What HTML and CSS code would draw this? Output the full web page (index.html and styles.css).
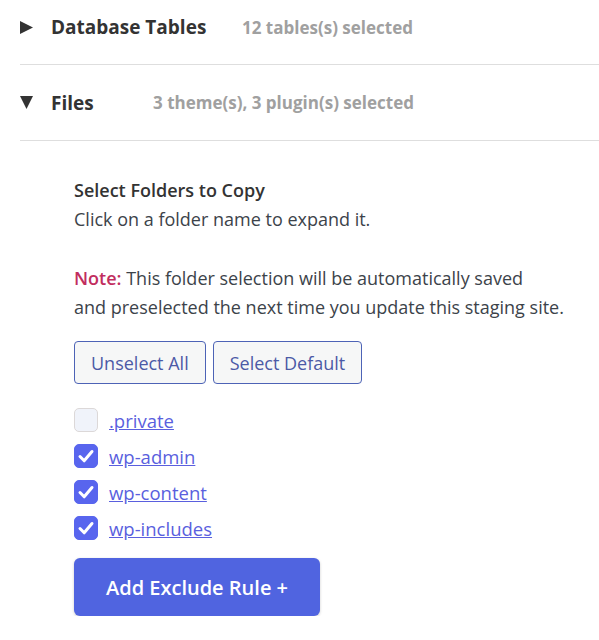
FILE: index.html
```html
<!DOCTYPE html>
<html>
<head>
<meta charset="utf-8">
<link rel="stylesheet" href="styles.css">
</head>
<body>
<div class="panel">
  <div class="section-header section-header--first">
    <svg class="caret" width="13" height="13" viewBox="0 0 13 13"><polygon points="0,0 13,6.5 0,13" /></svg>
    <span class="section-title section-title--db">Database Tables</span>
    <span class="section-sub">12 tables(s) selected</span>
  </div>
  <div class="section-header">
    <svg class="caret" width="13" height="13" viewBox="0 0 13 13"><polygon points="0,0 13,0 6.5,13" /></svg>
    <span class="section-title section-title--files">Files</span>
    <span class="section-sub">3 theme(s), 3 plugin(s) selected</span>
  </div>
  <div class="content">
    <p class="intro"><strong class="intro-title">Select Folders to Copy</strong><br>Click on a folder name to expand it.</p>
    <p class="note"><span class="note-label">Note:</span> This folder selection will be automatically saved<br>and preselected the next time you update this staging site.</p>
    <div class="btn-row">
      <button class="btn-outline">Unselect All</button>
      <button class="btn-outline">Select Default</button>
    </div>
    <ul class="folders">
      <li class="folder"><span class="check"></span><a href="#" class="folder-link">.private</a></li>
      <li class="folder"><span class="check check--on"><svg width="24" height="24" viewBox="0 0 24 24"><path d="M6 12.5 L10.2 16.8 L18 7.5" fill="none" stroke="#fff" stroke-width="3" stroke-linecap="round" stroke-linejoin="round"/></svg></span><a href="#" class="folder-link">wp-admin</a></li>
      <li class="folder"><span class="check check--on"><svg width="24" height="24" viewBox="0 0 24 24"><path d="M6 12.5 L10.2 16.8 L18 7.5" fill="none" stroke="#fff" stroke-width="3" stroke-linecap="round" stroke-linejoin="round"/></svg></span><a href="#" class="folder-link">wp-content</a></li>
      <li class="folder"><span class="check check--on"><svg width="24" height="24" viewBox="0 0 24 24"><path d="M6 12.5 L10.2 16.8 L18 7.5" fill="none" stroke="#fff" stroke-width="3" stroke-linecap="round" stroke-linejoin="round"/></svg></span><a href="#" class="folder-link">wp-includes</a></li>
    </ul>
    <button class="btn-primary">Add Exclude Rule +</button>
  </div>
</div>
</body>
</html>
```
FILE: styles.css
```css
* { box-sizing: border-box; }
body {
  margin: 0;
  background: #fff;
  font-family: "Open Sans", "Noto Sans", sans-serif;
  color: #3c434a;
}
.panel {
  padding-left: 20px;
}
.section-header {
  display: flex;
  align-items: center;
  height: 76px;
  border-bottom: 1px solid #dedede;
}
.section-header--first {
  height: 65px;
  padding-bottom: 10px;
}
.caret {
  fill: #333;
  flex: none;
}
.section-title {
  font-size: 19px;
  font-weight: 700;
  color: #333;
  margin-left: 18px;
}
.section-title--db { width: 191px; }
.section-title--files { width: 102px; }
.section-sub {
  font-size: 17px;
  font-weight: 700;
  color: #a0a0a0;
}
.content {
  padding: 35px 0 0 54px;
}
.intro, .note {
  margin: 0;
  font-size: 18px;
  line-height: 29px;
}
.intro-title {
  font-weight: 600;
  color: #333;
}
.note {
  margin-top: 30px;
}
.note-label {
  color: #c12d5e;
  font-weight: 600;
}
.btn-row {
  display: flex;
  gap: 7px;
  margin-top: 19px;
}
.btn-outline {
  height: 43px;
  padding: 0 16px;
  font-family: inherit;
  font-size: 18px;
  color: #4c5aa6;
  background: #f6f7f7;
  border: 1px solid #4d63b6;
  border-radius: 4px;
}
.folders {
  list-style: none;
  margin: 24px 0 0;
  padding: 0;
  display: flex;
  flex-direction: column;
  gap: 12px;
}
.folder {
  display: flex;
  align-items: center;
  gap: 11px;
  height: 24px;
}
.check {
  width: 24px;
  height: 24px;
  border-radius: 5px;
  border: 1px solid #dcd8d8;
  background: #f0f3fa;
  flex: none;
  display: block;
}
.check--on {
  background: #5865ee;
  border-color: #5865ee;
}
.check svg { display: block; margin: -1px; }
.folder-link {
  font-size: 18.5px;
  color: #5a5fde;
  text-decoration: underline;
}
.btn-primary {
  margin-top: 18px;
  width: 246px;
  height: 58px;
  font-family: inherit;
  font-size: 20px;
  font-weight: 600;
  color: #fff;
  background: #5064e0;
  border: none;
  border-radius: 6px;
  box-shadow: 0 1px 3px rgba(0,0,0,0.2);
}
```
